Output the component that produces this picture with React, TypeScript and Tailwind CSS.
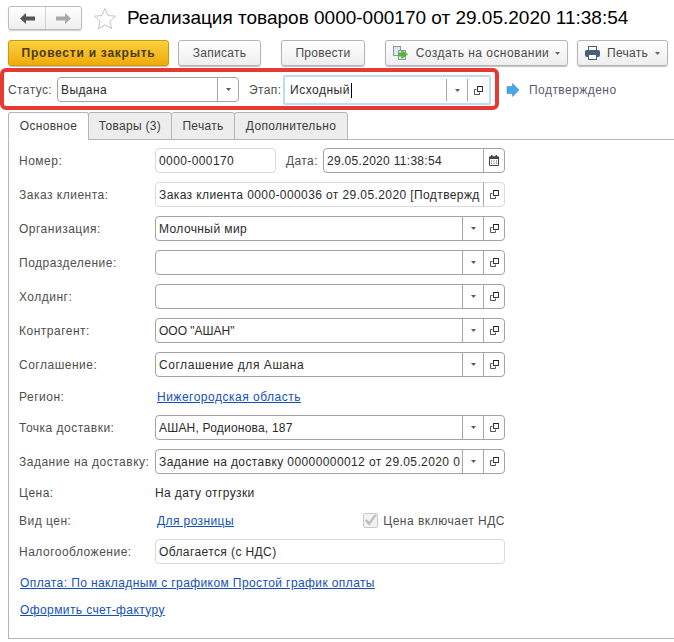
import React from "react";

const Caret = ({ c = "#5a5a5a" }: { c?: string }) => (
  <svg width="5" height="3" viewBox="0 0 5 3" className="shrink-0"><path d="M0 0h5L2.5 3z" fill={c} /></svg>
);
const OpenIcon = () => (
  <svg width="9" height="9" viewBox="0 0 9 9" className="shrink-0" fill="none">
    <rect x="3.5" y="0.5" width="5" height="5" fill="#fff" stroke="#3a3a3a" />
    <path d="M3.5 0.5h5" stroke="#222" />
    <path d="M2.5 3.5H0.5V8.5H5.5V6.5" stroke="#555" />
  </svg>
);
const CalIcon = () => (
  <svg width="10" height="11" viewBox="0 0 10 11" className="shrink-0">
    <path d="M0.5 2h9v8.5h-9z" fill="#fff" stroke="#444" />
    <path d="M0.5 1.5h9v2.5h-9z" fill="#444" />
    <path d="M2 0h1.4v2H2zM6.6 0H8v2H6.6z" fill="#444" />
    <path d="M2 5.5h1v1H2zM4.5 5.5h1v1h-1zM7 5.5h1v1H7zM2 7.8h1v1H2zM4.5 7.8h1v1h-1zM7 7.8h1v1H7z" fill="#555" />
  </svg>
);

const Cell = ({ children, w }: { children: React.ReactNode; w: string }) => (
  <div className={`flex items-center justify-center h-full shrink-0 border-l border-[#a8a8a8] ${w}`}>{children}</div>
);

function Field({
  text = "",
  select = false,
  open = false,
  cal = false,
  light = false,
  className = "w-[350px]",
  textClass = "",
}: {
  text?: string;
  select?: boolean;
  open?: boolean;
  cal?: boolean;
  light?: boolean;
  className?: string;
  textClass?: string;
}) {
  return (
    <div
      className={`flex h-[25px] items-center rounded-[4px] border bg-white ${
        light ? "border-[#d9d9d9]" : "border-[#a3a3a3]"
      } ${className}`}
    >
      <div className={`flex-1 min-w-0 whitespace-nowrap pl-[3px] text-[#2b2b2b] ${textClass}`}>{text}</div>
      {select && <Cell w="w-[21px]"><Caret /></Cell>}
      {open && <Cell w="w-[21px]"><OpenIcon /></Cell>}
      {cal && <Cell w="w-[21px]"><CalIcon /></Cell>}
    </div>
  );
}

const Label = ({ children }: { children: React.ReactNode }) => (
  <div className="w-[136px] shrink-0 whitespace-nowrap tracking-[0.5px] text-[#4e4e4e]">{children}</div>
);
const Link = ({ children, className = "" }: { children: React.ReactNode; className?: string }) => (
  <span className={`text-[#1550b8] underline ${className}`}>{children}</span>
);
const Row = ({ label, children, h = "h-[25px]" }: { label: string; children: React.ReactNode; h?: string }) => (
  <div className={`flex items-center ${h}`}>
    <Label>{label}</Label>
    {children}
  </div>
);

function Btn({ children, className = "" }: { children: React.ReactNode; className?: string }) {
  return (
    <div
      className={`flex h-[26px] items-center justify-center rounded-[3px] border border-[#b5b5b5] bg-gradient-to-b from-white to-[#eeeeee] tracking-[0.25px] text-[#4a4a4a] shadow-[0_1px_1px_rgba(0,0,0,0.25)] ${className}`}
    >
      {children}
    </div>
  );
}

function Tab({ children, active = false, w }: { children: React.ReactNode; active?: boolean; w: string }) {
  return (
    <div
      className={`flex h-[28px] items-center justify-center rounded-t-[3px] border border-[#b5b5b5] tracking-[0.3px] text-[#3c3c3c] ${w} ${
        active ? "border-b-white bg-white" : "-ml-px bg-[#ededed]"
      }`}
    >
      {children}
    </div>
  );
}

export default function App() {
  return (
    <div
      className="relative h-[642px] w-[674px] overflow-hidden bg-white text-[12px] leading-none tracking-[0.4px]"
      style={{ fontFamily: '"Liberation Sans", Arial, sans-serif' }}
    >
      {/* Title row */}
      <div className="flex h-[40px] items-start pt-[6px] pl-[8px]">
        <div className="flex h-[24px] w-[74px] rounded-[3px] border border-[#bdbdbd] bg-gradient-to-b from-white to-[#efefef] shadow-[0_1px_1px_rgba(0,0,0,0.2)]">
          <div className="flex w-[37px] items-center justify-center border-r border-[#d0d0d0]">
            <svg width="15" height="11" viewBox="0 0 15 11"><path d="M0 5.5L6 0v3.5h9v4H6V11z" fill="#555" /></svg>
          </div>
          <div className="flex flex-1 items-center justify-center">
            <svg width="15" height="11" viewBox="0 0 15 11"><path d="M15 5.5L9 0v3.5H0v4h9V11z" fill="#a9a9a9" /></svg>
          </div>
        </div>
        <svg width="24" height="24" viewBox="0 0 24 24" className="ml-[11px] mt-[1px]" fill="#fff" stroke="#c4c4c4">
          <path d="M12 1.5l3.1 7 7.4.7-5.6 5 1.7 7.6L12 17.8l-6.6 4 1.7-7.6-5.6-5 7.4-.7z" />
        </svg>
        <div className="ml-[10px] mt-[1px] whitespace-nowrap text-[19px] leading-[22px] tracking-normal text-black">
          Реализация товаров 0000-000170 от 29.05.2020 11:38:54
        </div>
      </div>

      {/* Command bar */}
      <div className="flex h-[26px] items-center pl-[8px]">
        <div className="flex h-[26px] w-[161px] items-center justify-center rounded-[3px] border border-[#c99a10] bg-gradient-to-b from-[#fcd13a] to-[#eeaa04] font-bold tracking-[0.75px] text-[#4a3a12] shadow-[0_1px_1px_rgba(0,0,0,0.25)]">
          Провести и закрыть
        </div>
        <Btn className="ml-[9px] w-[83px]">Записать</Btn>
        <Btn className="ml-[20px] w-[84px]">Провести</Btn>
        <Btn className="ml-[20px] w-[183px] gap-[6px] tracking-[0.45px]">
          <svg width="17" height="15" viewBox="0 0 17 15" className="shrink-0">
            <rect x="0.5" y="0.5" width="7" height="9" fill="#dfe6ee" stroke="#8a97a6" />
            <rect x="5.5" y="4.5" width="7" height="9" fill="#e6ecd8" stroke="#8a97a6" />
            <path d="M5 6.5h3.5V4L15 8.5 8.5 13v-2.5H5z" fill="#58b33a" />
          </svg>
          <span>Создать на основании</span>
          <Caret c="#666" />
        </Btn>
        <Btn className="ml-[9px] w-[91px] gap-[7px]">
          <svg width="15" height="14" viewBox="0 0 15 14" className="shrink-0">
            <rect x="3.5" y="0.5" width="8" height="4" fill="#fff" stroke="#44607e" />
            <rect x="0.5" y="4.5" width="14" height="6" rx="1" fill="#44607e" stroke="#44607e" />
            <rect x="3.5" y="8.5" width="8" height="5" fill="#fff" stroke="#44607e" />
          </svg>
          <span>Печать</span>
          <Caret c="#666" />
        </Btn>
      </div>

      {/* Status row */}
      <div className="mt-[11px] flex h-[25px] items-center pl-[8px]">
        <span className="w-[49px] text-[#4e4e4e]">Статус:</span>
        <Field text="Выдана" select className="w-[182px]" />
        <span className="ml-[10px] w-[34px] text-[#4e4e4e]">Этап:</span>
        <div className="mt-px flex h-[30px] w-[208px] items-center rounded-[2px] border-2 border-[#bcdcf6] bg-white py-[2px]">
          <div className="flex h-full flex-1 items-center pl-[5px] tracking-[0.5px] text-[#2b2b2b]">
            Исходный<span className="ml-px inline-block h-[15px] w-px bg-black" />
          </div>
          <Cell w="w-[21px]"><Caret /></Cell>
          <Cell w="w-[22px]"><OpenIcon /></Cell>
        </div>
        <svg width="14" height="14" viewBox="0 0 14 14" className="ml-[15px] shrink-0">
          <path d="M1 3.5h5.5V0.5L13 7l-6.5 6.5v-3H1z" fill="#48a8e6" stroke="#2f7fb8" strokeWidth="0.5" />
        </svg>
        <span className="ml-[9px] tracking-[0.45px] text-[#5a5a72]">Подтверждено</span>
      </div>

      {/* Tabs */}
      <div className="mt-[10px] flex pl-[8px]">
        <Tab active w="w-[81px]">Основное</Tab>
        <Tab w="w-[84px]">Товары (3)</Tab>
        <Tab w="w-[64px]">Печать</Tab>
        <Tab w="w-[114px]">Дополнительно</Tab>
      </div>

      {/* Form panel */}
      <div className="-mt-px ml-[8px] flex h-[500px] flex-col gap-[9px] border border-r-0 border-[#b5b5b5] pl-[10px] pt-[8px]">
        <div className="flex h-[25px] items-center">
          <Label>Номер:</Label>
          <Field text="0000-000170" light className="w-[121px]" />
          <span className="ml-[10px] w-[37px] text-[#4e4e4e]">Дата:</span>
          <Field text="29.05.2020 11:38:54" cal className="w-[182px]" textClass="tracking-[0.3px]" />
        </div>
        <Row label="Заказ клиента:"><Field text="Заказ клиента 0000-000036 от 29.05.2020 [Подтвержд" open light /></Row>
        <Row label="Организация:"><Field text="Молочный мир" select open /></Row>
        <Row label="Подразделение:"><Field select open /></Row>
        <Row label="Холдинг:"><Field select open /></Row>
        <Row label="Контрагент:"><Field text='ООО "АШАН"' select open textClass="tracking-normal" /></Row>
        <Row label="Соглашение:"><Field text="Соглашение для Ашана" select open textClass="tracking-[0.55px]" /></Row>
        <Row label="Регион:" h="h-[20px] pt-px"><Link className="ml-[2px] tracking-[0.5px]">Нижегородская область</Link></Row>
        <Row label="Точка доставки:"><Field text="АШАН, Родионова, 187" select open textClass="tracking-[0.2px]" /></Row>
        <Row label="Задание на доставку:"><Field text="Задание на доставку 00000000012 от 29.05.2020 0" select open /></Row>
        <Row label="Цена:" h="h-[18px] pt-px"><span className="text-[#2b2b2b]">На дату отгрузки</span></Row>
        <div className="flex h-[20px] w-[486px] items-center pt-px">
          <Label>Вид цен:</Label>
          <Link className="ml-[2px]">Для розницы</Link>
          <div className="ml-auto flex items-center gap-[5px]">
            <div className="flex h-[15px] w-[15px] items-center justify-center rounded-[2px] border border-[#c8c8c8] bg-[#f2f2f2]">
              <svg width="14" height="14" viewBox="0 0 14 14" className="-mt-[2px]"><path d="M2 7l3.5 4L12.5 1.5" fill="none" stroke="#bcbcbc" strokeWidth="2.4" /></svg>
            </div>
            <span className="tracking-[0.5px] text-[#4e4e4e]">Цена включает НДС</span>
          </div>
        </div>
        <Row label="Налогообложение:"><Field text="Облагается (с НДС)" light /></Row>
        <div className="flex h-[18px] items-center pt-px"><Link className="ml-[1px]">Оплата: По накладным с графиком Простой график оплаты</Link></div>
        <div className="flex h-[18px] items-center pt-px"><Link className="ml-[1px]">Оформить счет-фактуру</Link></div>
      </div>

      {/* Red annotation frame */}
      <div className="absolute left-0 top-[68px] h-[42px] w-[499px] rounded-[6px] border-[4px] border-[#e53a34]" />
    </div>
  );
}
